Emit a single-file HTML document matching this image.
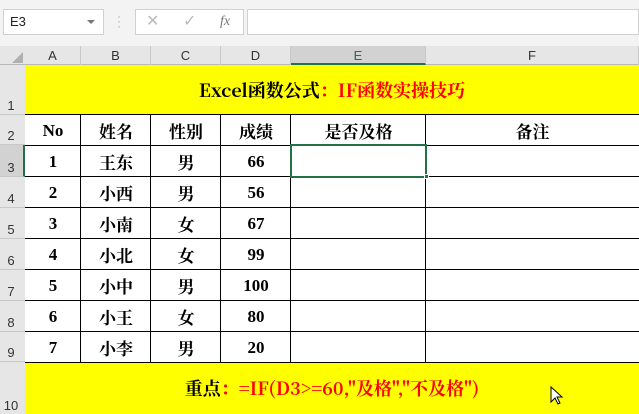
<html><head><style>
body{margin:0;width:639px;height:414px;overflow:hidden;background:#fff;position:relative;font-family:"Liberation Sans",sans-serif}
.a{position:absolute;box-sizing:border-box}
.ch{position:absolute;top:46px;height:19px;text-align:center;font-size:13px;color:#333;line-height:20px;border-right:1px solid #c8c8c8;box-sizing:border-box}
.rh{position:absolute;left:0;width:25px;font-size:13px;color:#333;text-align:center;border-bottom:1px solid #c8c8c8;box-sizing:border-box;background:#e6e6e6}
.rh span{position:absolute;bottom:1px;left:0;width:22px;text-align:center}
.c{position:absolute;font-family:"Liberation Serif","Noto Serif CJK SC",serif;font-weight:bold;font-size:17px;color:#000;display:flex;align-items:center;justify-content:center;line-height:1}
.k{font-family:"Noto Serif CJK SC",serif}
.vl{position:absolute;width:1px;background:#000}
.hl{position:absolute;height:1px;background:#000;left:25px;width:614px}
</style></head><body>
<div class="a" style="left:0;top:0;width:639px;height:46px;background:#f3f3f3"></div>
<div class="a" style="left:3px;top:9px;width:101px;height:26px;background:#fff;border:1px solid #d0d0d0;font-size:13px;line-height:24px;padding-left:6px;color:#222">E3</div>
<div class="a" style="left:87px;top:20px;width:0;height:0;border-left:4px solid transparent;border-right:4px solid transparent;border-top:4px solid #777"></div>
<div class="a" style="left:117px;top:14px;color:#aaa;font-size:12px;line-height:5px">·<br>·<br>·</div>
<div class="a" style="left:135px;top:9px;width:109px;height:26px;background:#fff;border:1px solid #d0d0d0;color:#bbb;font-size:16px;line-height:24px"><span style="position:absolute;left:10px">✕</span><span style="position:absolute;left:47px">✓</span><span style="position:absolute;left:84px;color:#777;font-family:'Liberation Serif',serif;font-style:italic;font-size:14px">fx</span></div>
<div class="a" style="left:247px;top:9px;width:392px;height:26px;background:#fff;border:1px solid #d0d0d0"></div>
<div class="a" style="left:0;top:46px;width:639px;height:19px;background:#e6e6e6;border-bottom:1px solid #b8b8b8"></div>
<div class="a" style="left:12px;top:52px;width:0;height:0;border-left:11px solid transparent;border-bottom:11px solid #b0b0b0"></div>
<div class="ch" style="left:25px;width:56px">A</div>
<div class="ch" style="left:81px;width:70px">B</div>
<div class="ch" style="left:151px;width:70px">C</div>
<div class="ch" style="left:221px;width:70px">D</div>
<div class="ch" style="left:291px;width:135px;background:#d2d2d2;border-bottom:2px solid #217346;color:#217346">E</div>
<div class="ch" style="left:426px;width:213px">F</div>
<div class="rh" style="top:65px;height:50px"><span>1</span></div>
<div class="rh" style="top:115px;height:30px"><span>2</span></div>
<div class="rh" style="top:145px;height:32px;background:#d2d2d2;border-right:2px solid #217346"><span>3</span></div>
<div class="rh" style="top:177px;height:31px"><span>4</span></div>
<div class="rh" style="top:208px;height:31px"><span>5</span></div>
<div class="rh" style="top:239px;height:31px"><span>6</span></div>
<div class="rh" style="top:270px;height:31px"><span>7</span></div>
<div class="rh" style="top:301px;height:31px"><span>8</span></div>
<div class="rh" style="top:332px;height:30px"><span>9</span></div>
<div class="rh" style="top:362px;height:52px;border-bottom:none"><span>10</span></div>
<div class="a" style="left:25px;top:65px;width:614px;height:50px;background:#ff0"></div>
<div class="a" style="left:25px;top:362px;width:614px;height:52px;background:#ff0"></div>
<div class="c k" style="left:25px;width:614px;top:65px;height:50px;font-size:18px">Excel函数公式<span style="color:#f00">：IF函数实操技巧</span></div>
<div class="c k" style="left:25px;width:614px;top:362px;height:52px;font-size:18px">重点<span style="color:#f00">：=IF(D3&gt;=60,"及格","不及格")</span></div>
<div class="hl" style="top:114px"></div><div class="hl" style="top:145px"></div><div class="hl" style="top:176px"></div><div class="hl" style="top:207px"></div><div class="hl" style="top:238px"></div><div class="hl" style="top:269px"></div><div class="hl" style="top:300px"></div><div class="hl" style="top:331px"></div><div class="hl" style="top:362px"></div>
<div class="vl" style="left:80px;top:114px;height:248px"></div><div class="vl" style="left:150px;top:114px;height:248px"></div><div class="vl" style="left:220px;top:114px;height:248px"></div><div class="vl" style="left:290px;top:114px;height:248px"></div><div class="vl" style="left:425px;top:114px;height:248px"></div>
<div class="c" style="left:25px;width:56px;top:115px;height:30px">No</div><div class="c k" style="left:81px;width:70px;top:115px;height:30px">姓名</div><div class="c k" style="left:151px;width:70px;top:115px;height:30px">性别</div><div class="c k" style="left:221px;width:70px;top:115px;height:30px">成绩</div><div class="c k" style="left:291px;width:135px;top:115px;height:30px">是否及格</div><div class="c k" style="left:426px;width:213px;top:115px;height:30px">备注</div>
<div class="c" style="left:25px;width:56px;top:146px;height:31px">1</div><div class="c k" style="left:81px;width:70px;top:146px;height:31px">王东</div><div class="c k" style="left:151px;width:70px;top:146px;height:31px">男</div><div class="c" style="left:221px;width:70px;top:146px;height:31px">66</div>
<div class="c" style="left:25px;width:56px;top:177px;height:31px">2</div><div class="c k" style="left:81px;width:70px;top:177px;height:31px">小西</div><div class="c k" style="left:151px;width:70px;top:177px;height:31px">男</div><div class="c" style="left:221px;width:70px;top:177px;height:31px">56</div>
<div class="c" style="left:25px;width:56px;top:208px;height:31px">3</div><div class="c k" style="left:81px;width:70px;top:208px;height:31px">小南</div><div class="c k" style="left:151px;width:70px;top:208px;height:31px">女</div><div class="c" style="left:221px;width:70px;top:208px;height:31px">67</div>
<div class="c" style="left:25px;width:56px;top:239px;height:31px">4</div><div class="c k" style="left:81px;width:70px;top:239px;height:31px">小北</div><div class="c k" style="left:151px;width:70px;top:239px;height:31px">女</div><div class="c" style="left:221px;width:70px;top:239px;height:31px">99</div>
<div class="c" style="left:25px;width:56px;top:270px;height:31px">5</div><div class="c k" style="left:81px;width:70px;top:270px;height:31px">小中</div><div class="c k" style="left:151px;width:70px;top:270px;height:31px">男</div><div class="c" style="left:221px;width:70px;top:270px;height:31px">100</div>
<div class="c" style="left:25px;width:56px;top:301px;height:31px">6</div><div class="c k" style="left:81px;width:70px;top:301px;height:31px">小王</div><div class="c k" style="left:151px;width:70px;top:301px;height:31px">女</div><div class="c" style="left:221px;width:70px;top:301px;height:31px">80</div>
<div class="c" style="left:25px;width:56px;top:332px;height:30px">7</div><div class="c k" style="left:81px;width:70px;top:332px;height:30px">小李</div><div class="c k" style="left:151px;width:70px;top:332px;height:30px">男</div><div class="c" style="left:221px;width:70px;top:332px;height:30px">20</div>
<div class="a" style="left:290px;top:144px;width:137px;height:34px;border:2px solid #217346"></div>
<div class="a" style="left:424px;top:174px;width:5px;height:5px;background:#217346;border:1px solid #fff"></div>
<svg class="a" style="left:550px;top:386px" width="14" height="20" viewBox="0 0 14 20"><path d="M1 1 L1 16 L5 12 L8 18 L10 17 L7 11 L12 11 Z" fill="#fff" stroke="#000" stroke-width="1"/></svg>
</body></html>
